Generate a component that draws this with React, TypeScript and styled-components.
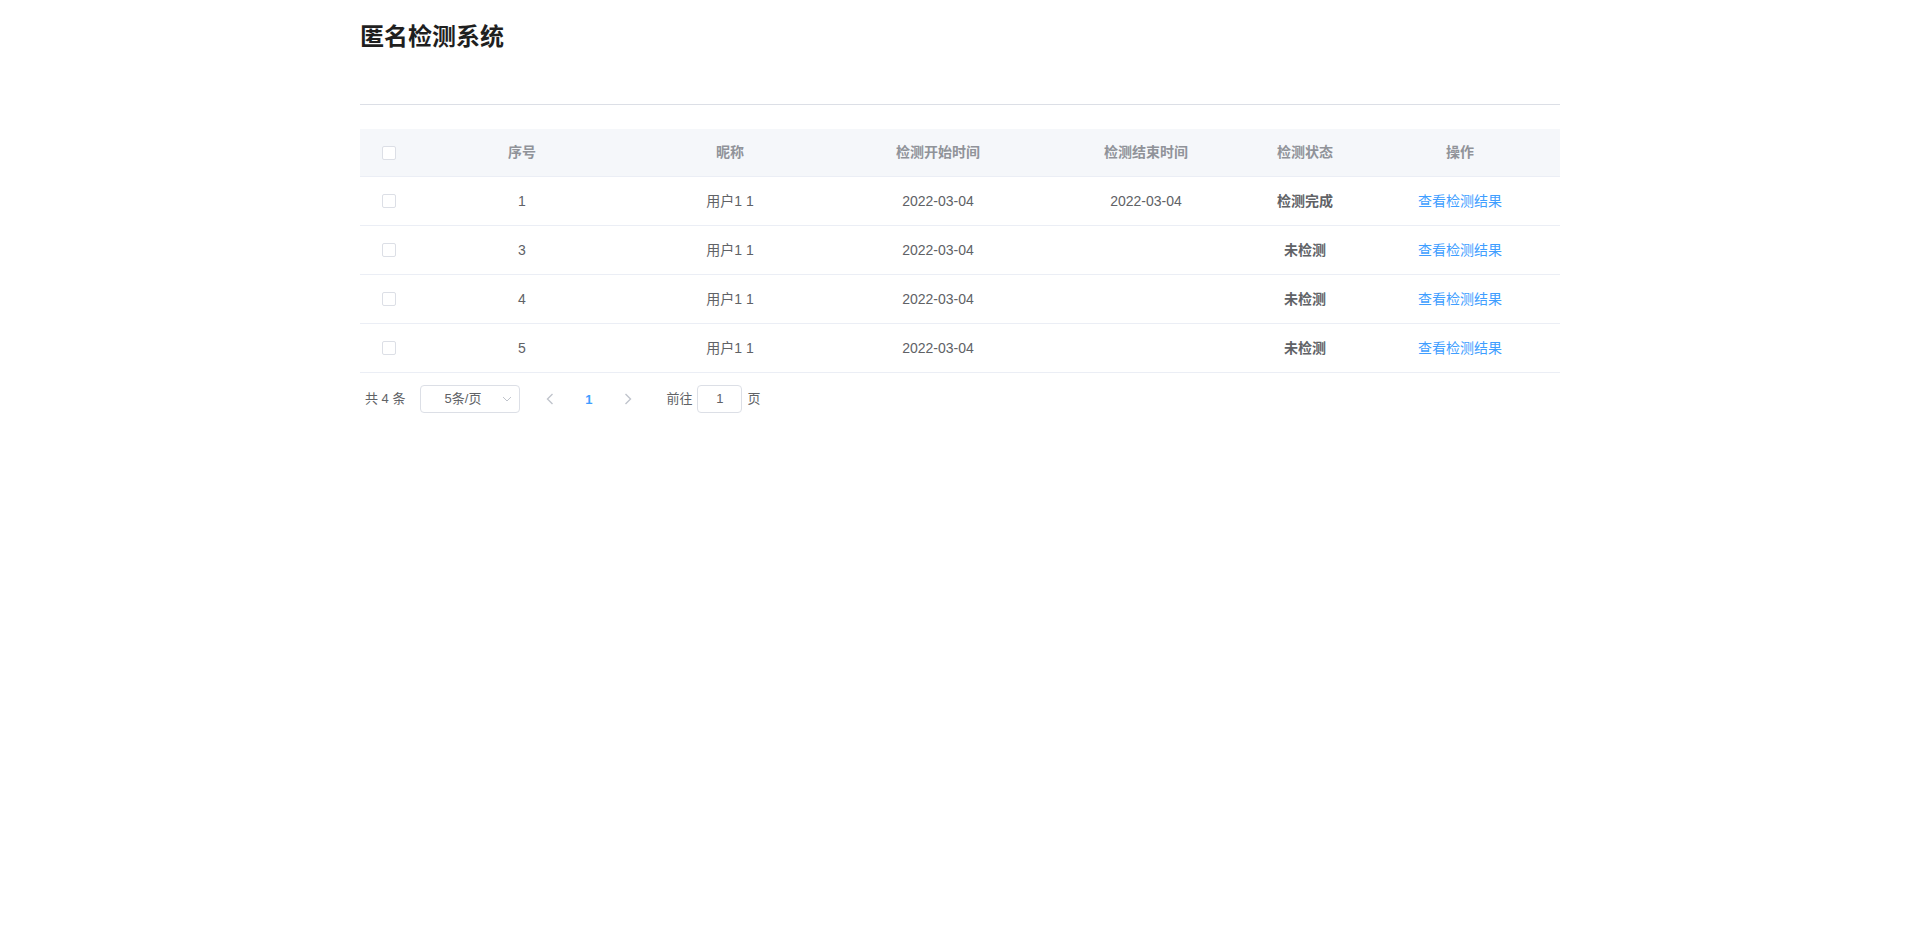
import React from "react";
import styled, { createGlobalStyle } from "styled-components";

const GlobalStyle = createGlobalStyle`
  html, body {
    margin: 0;
    padding: 0;
    background: #ffffff;
    font-family: "Liberation Sans", Arial, "Noto Sans CJK SC", sans-serif;
    color: #606266;
  }
  * { box-sizing: border-box; }
`;

const Page = styled.div`
  width: 1200px;
  margin: 0 auto;
`;

const Header = styled.header`
  height: 105px;
  padding-top: 19px;
  border-bottom: 1px solid #dcdfe6;
`;

const Title = styled.h2`
  margin: 0;
  font-size: 24px;
  line-height: 36px;
  font-weight: 700;
  color: #1f1f1f;
  font-family: "Liberation Sans", "Noto Sans CJK SC", sans-serif;
`;

const Table = styled.div`
  margin-top: 24px;
  width: 100%;
`;

const Row = styled.div<{ $head?: boolean }>`
  display: grid;
  grid-template-columns: 58px 1fr 1fr 1fr 1fr 110px 200px;
  height: ${(p) => (p.$head ? 48 : 49)}px;
  background: ${(p) => (p.$head ? "#f5f7fa" : "#ffffff")};
  border-bottom: 1px solid #ebeef5;
  align-items: center;
`;

const Cell = styled.div<{ $head?: boolean; $bold?: boolean; $link?: boolean }>`
  text-align: center;
  font-size: 14px;
  line-height: 23px;
  white-space: nowrap;
  font-weight: ${(p) => (p.$head || p.$bold ? 700 : 400)};
  color: ${(p) => (p.$head ? "#909399" : p.$link ? "#409eff" : "#606266")};
  cursor: ${(p) => (p.$link ? "pointer" : "default")};
  display: flex;
  justify-content: center;
  align-items: center;
`;

const Checkbox = styled.span`
  display: inline-block;
  width: 14px;
  height: 14px;
  border: 1px solid #dcdfe6;
  border-radius: 2px;
  background: #ffffff;
`;

const Pagination = styled.div`
  margin-top: 10px;
  padding: 2px 5px;
  display: flex;
  align-items: center;
  height: 32px;
  font-size: 13px;
  color: #606266;
`;

const Total = styled.span`
  line-height: 28px;
  margin-right: 15px;
  white-space: pre;
`;

const Select = styled.div`
  position: relative;
  width: 100px;
  height: 28px;
  border: 1px solid #dcdfe6;
  border-radius: 4px;
  padding: 0 30px 0 15px;
  text-align: center;
  line-height: 26px;
  margin-right: 10px;
  color: #606266;
`;

const SelectArrow = styled.svg`
  position: absolute;
  right: 7px;
  top: 10px;
`;

const NavButton = styled.button<{ $active?: boolean }>`
  width: 39px;
  height: 28px;
  border: none;
  background: transparent;
  padding: 0;
  display: flex;
  align-items: center;
  justify-content: center;
  font-family: inherit;
  font-size: 13px;
  font-weight: 700;
  color: ${(p) => (p.$active ? "#409eff" : "#c0c4cc")};
`;

const Jumper = styled.span`
  margin-left: 19px;
  display: flex;
  align-items: center;
  line-height: 28px;
`;

const JumpInput = styled.div`
  width: 45px;
  height: 28px;
  border: 1px solid #dcdfe6;
  border-radius: 4px;
  margin: 0 5px 0 5px;
  text-align: center;
  line-height: 26px;
  color: #606266;
`;

type Item = { id: number; name: string; start: string; end: string; status: string };

const rows: Item[] = [
  { id: 1, name: "用户1 1", start: "2022-03-04", end: "2022-03-04", status: "检测完成" },
  { id: 3, name: "用户1 1", start: "2022-03-04", end: "", status: "未检测" },
  { id: 4, name: "用户1 1", start: "2022-03-04", end: "", status: "未检测" },
  { id: 5, name: "用户1 1", start: "2022-03-04", end: "", status: "未检测" },
];

const Chevron = ({ dir }: { dir: "left" | "right" }) => (
  <svg width="8" height="12" viewBox="0 0 8 12">
    <polyline
      points={dir === "left" ? "6.5,1 1.5,6 6.5,11" : "1.5,1 6.5,6 1.5,11"}
      fill="none"
      stroke="currentColor"
      strokeWidth="1.4"
    />
  </svg>
);

export default function App() {
  return (
    <>
      <GlobalStyle />
      <Page>
        <Header>
          <Title>匿名检测系统</Title>
        </Header>
        <Table>
          <Row $head>
            <Cell $head>
              <Checkbox />
            </Cell>
            <Cell $head>序号</Cell>
            <Cell $head>昵称</Cell>
            <Cell $head>检测开始时间</Cell>
            <Cell $head>检测结束时间</Cell>
            <Cell $head>检测状态</Cell>
            <Cell $head>操作</Cell>
          </Row>
          {rows.map((r) => (
            <Row key={r.id}>
              <Cell>
                <Checkbox />
              </Cell>
              <Cell>{r.id}</Cell>
              <Cell>{r.name}</Cell>
              <Cell>{r.start}</Cell>
              <Cell>{r.end}</Cell>
              <Cell $bold>{r.status}</Cell>
              <Cell $link>查看检测结果</Cell>
            </Row>
          ))}
        </Table>
        <Pagination>
          <Total>共 4 条</Total>
          <Select>
            5条/页
            <SelectArrow width="10" height="6" viewBox="0 0 10 6">
              <polyline points="1,1 5,5 9,1" fill="none" stroke="#c0c4cc" strokeWidth="1" />
            </SelectArrow>
          </Select>
          <NavButton>
            <Chevron dir="left" />
          </NavButton>
          <NavButton $active>1</NavButton>
          <NavButton>
            <Chevron dir="right" />
          </NavButton>
          <Jumper>
            前往
            <JumpInput>1</JumpInput>
            页
          </Jumper>
        </Pagination>
      </Page>
    </>
  );
}
